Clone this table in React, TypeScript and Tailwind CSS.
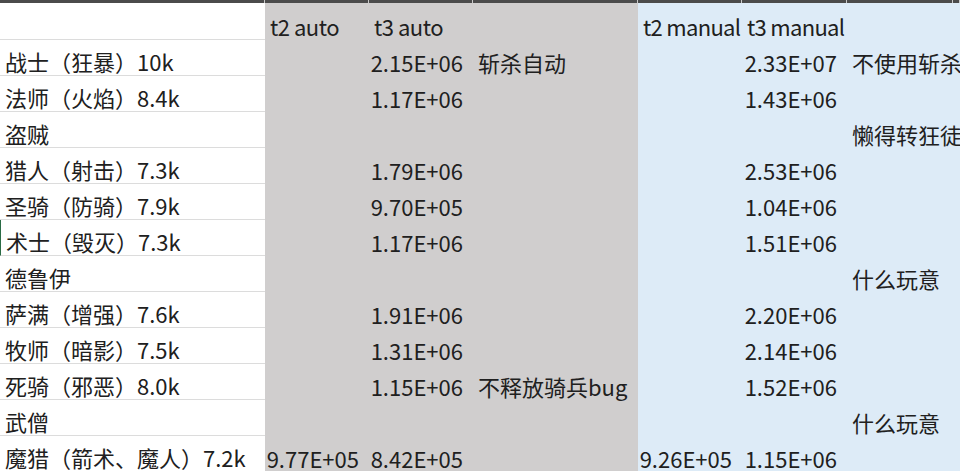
import React from "react";

type Row = {
  a: string;
  b?: string;
  c?: string;
  d?: string;
  e?: string;
  f?: string;
  g?: string;
  sel?: boolean;
};

const rows: Row[] = [
  { a: "战士（狂暴）10k", c: "2.15E+06", d: "斩杀自动", f: "2.33E+07", g: "不使用斩杀" },
  { a: "法师（火焰）8.4k", c: "1.17E+06", f: "1.43E+06" },
  { a: "盗贼", g: "懒得转狂徒" },
  { a: "猎人（射击）7.3k", c: "1.79E+06", f: "2.53E+06" },
  { a: "圣骑（防骑）7.9k", c: "9.70E+05", f: "1.04E+06" },
  { a: "术士（毁灭）7.3k", c: "1.17E+06", f: "1.51E+06", sel: true },
  { a: "德鲁伊", g: "什么玩意" },
  { a: "萨满（增强）7.6k", c: "1.91E+06", f: "2.20E+06" },
  { a: "牧师（暗影）7.5k", c: "1.31E+06", f: "2.14E+06" },
  { a: "死骑（邪恶）8.0k", c: "1.15E+06", d: "不释放骑兵bug", f: "1.52E+06" },
  { a: "武僧", g: "什么玩意" },
  { a: "魔猎（箭术、魔人）7.2k", b: "9.77E+05", c: "8.42E+05", e: "9.26E+05", f: "1.15E+06" },
];

const gridCols = "grid grid-cols-[265px_104px_104px_165px_104px_105px_106px_1fr]";

function TextCell({ v, cls = "", tcls = "" }: { v?: string; cls?: string; tcls?: string }) {
  return (
    <div className={`h-[36px] min-w-0 flex items-end pl-[5px] pb-[2px] whitespace-nowrap overflow-visible ${cls}`}>
      <span className={`relative z-[1] shrink-0 leading-[24px] ${tcls}`}>{v ?? ""}</span>
    </div>
  );
}

function NumCell({ v, cls = "" }: { v?: string; cls?: string }) {
  return (
    <div className={`h-[36px] min-w-0 flex items-end justify-end pr-[10px] pb-[2px] whitespace-nowrap ${cls}`}>
      <span className="relative z-[1] shrink-0 leading-[24px]">{v ?? ""}</span>
    </div>
  );
}

export default function App() {
  return (
    <div className="w-[960px] h-[471px] overflow-hidden bg-white text-[22px] text-[#202020] font-['Noto_Sans_CJK_SC',sans-serif]">
      {/* top dark strip */}
      <div className={`${gridCols} h-[3px] bg-[#4b4b4b]`}>
        {Array.from({ length: 8 }).map((_, i) => (
          <div key={i} className="h-[3px] border-r border-[#c9c9c9]" />
        ))}
      </div>
      {/* header row */}
      <div className={gridCols}>
        <div className="h-[37px] bg-white border-b border-[#dcdcdc]" />
        <TextCell v="t2 auto" cls="h-[37px] bg-[#d0cece] pl-[4px]" tcls="tracking-[-0.5px]" />
        <TextCell v="t3 auto" cls="h-[37px] bg-[#d0cece] pl-[5px]" tcls="tracking-[-0.5px]" />
        <div className="h-[37px] bg-[#d0cece]" />
        <TextCell v="t2 manual" cls="h-[37px] bg-[#ddebf7] pl-[4px]" tcls="tracking-[-0.7px]" />
        <TextCell v="t3 manual" cls="h-[37px] bg-[#ddebf7] pl-[5px]" tcls="tracking-[-0.7px]" />
        <div className="h-[37px] bg-[#ddebf7]" />
        <div className="h-[37px] bg-[#ddebf7]" />
      </div>
      {rows.map((r, i) => (
        <div key={i} className={gridCols}>
          <TextCell
            v={r.a}
            cls={`bg-white border-b border-[#dcdcdc] ${r.sel ? "border-l border-l-[#2a6b45] pl-[4px]" : ""}`}
          />
          <NumCell v={r.b} cls="bg-[#d0cece]" />
          <NumCell v={r.c} cls="bg-[#d0cece]" />
          <TextCell v={r.d} cls="bg-[#d0cece]" />
          <NumCell v={r.e} cls="bg-[#ddebf7]" />
          <NumCell v={r.f} cls="bg-[#ddebf7]" />
          <TextCell v={r.g} cls="bg-[#ddebf7] pl-[4px]" />
          <div className="h-[36px] bg-[#ddebf7]" />
        </div>
      ))}
    </div>
  );
}
